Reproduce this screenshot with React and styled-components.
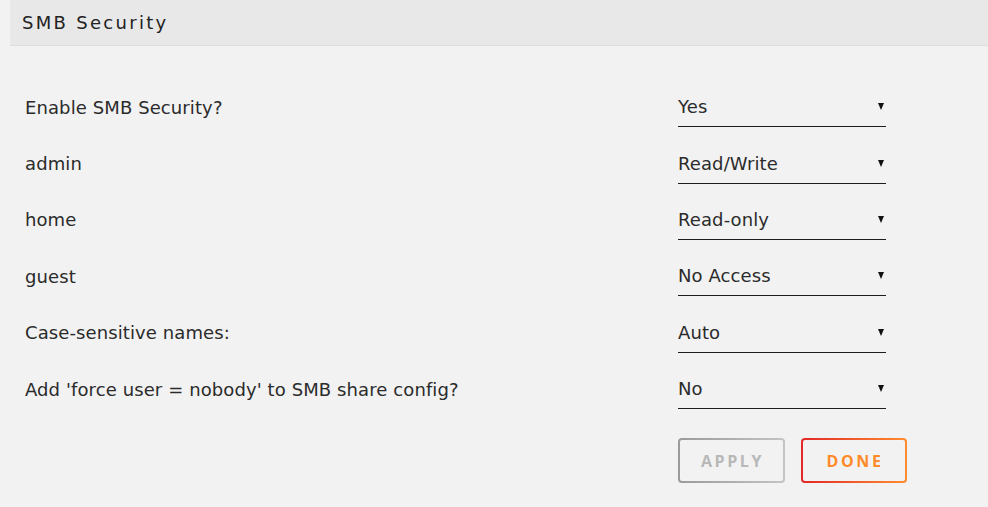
import React from "react";
import styled, { createGlobalStyle } from "styled-components";

const Global = createGlobalStyle`
  html, body {
    margin: 0;
    padding: 0;
    background: #f2f2f2;
  }
  body {
    font-family: "DejaVu Sans", "Open Sans", sans-serif;
    color: #2b2b2b;
  }
`;

const Page = styled.div`
  padding-left: 10px;
  width: 978px;
`;

const TitleBar = styled.div`
  height: 45px;
  display: flex;
  align-items: center;
  padding-left: 12px;
  background: #e8e8e8;
  border-bottom: 1px solid #dedede;
  font-size: 18px;
  letter-spacing: 2.3px;
  color: #222;
`;

const Form = styled.div`
  padding: 33px 0 0 15px;
  display: flex;
  flex-direction: column;
`;

const Row = styled.div`
  display: grid;
  grid-template-columns: 653px 208px;
  align-items: center;
  height: 56.4px;
`;

const Label = styled.div`
  font-size: 18px;
  letter-spacing: 0.1px;
  color: #2b2b2b;
`;

const Select = styled.div`
  position: relative;
  height: 39px;
  display: flex;
  align-items: center;
  border-bottom: 1px solid #1e1e1e;
  font-size: 18px;
  letter-spacing: 0.1px;
  color: #2b2b2b;
`;

const Arrow = styled.span`
  position: absolute;
  right: 2px;
  top: 16px;
  width: 0;
  height: 0;
  border-left: 3.5px solid transparent;
  border-right: 3.5px solid transparent;
  border-top: 7px solid #111;
`;

const Actions = styled.div`
  display: flex;
  gap: 16px;
  margin: 21px 0 0 653px;
`;

const Button = styled.button`
  box-sizing: border-box;
  width: ${(p) => p.$w}px;
  height: 45px;
  border: 2px solid transparent;
  border-radius: 4px;
  font-family: "Open Sans", "Noto Sans", sans-serif;
  font-weight: 700;
  font-size: 16px;
  letter-spacing: 2.6px;
  padding: 0 0 0 2px;
  cursor: pointer;
  color: ${(p) => (p.$primary ? "#ff8a2a" : "#b8b8b8")};
  background:
    linear-gradient(#f2f2f2, #f2f2f2) padding-box,
    ${(p) =>
        p.$primary
          ? "linear-gradient(90deg, #e22828, #ff8c2f)"
          : "linear-gradient(90deg, #9a9a9a, #c4c4c4)"}
      border-box;
`;

const rows = [
  ["Enable SMB Security?", "Yes"],
  ["admin", "Read/Write"],
  ["home", "Read-only"],
  ["guest", "No Access"],
  ["Case-sensitive names:", "Auto"],
  ["Add 'force user = nobody' to SMB share config?", "No"],
];

export default function App() {
  return (
    <Page>
      <Global />
      <TitleBar>SMB Security</TitleBar>
      <Form>
        {rows.map(([label, value]) => (
          <Row key={label}>
            <Label>{label}</Label>
            <Select>
              {value}
              <Arrow />
            </Select>
          </Row>
        ))}
        <Actions>
          <Button $w={107}>APPLY</Button>
          <Button $w={106} $primary>
            DONE
          </Button>
        </Actions>
      </Form>
    </Page>
  );
}
